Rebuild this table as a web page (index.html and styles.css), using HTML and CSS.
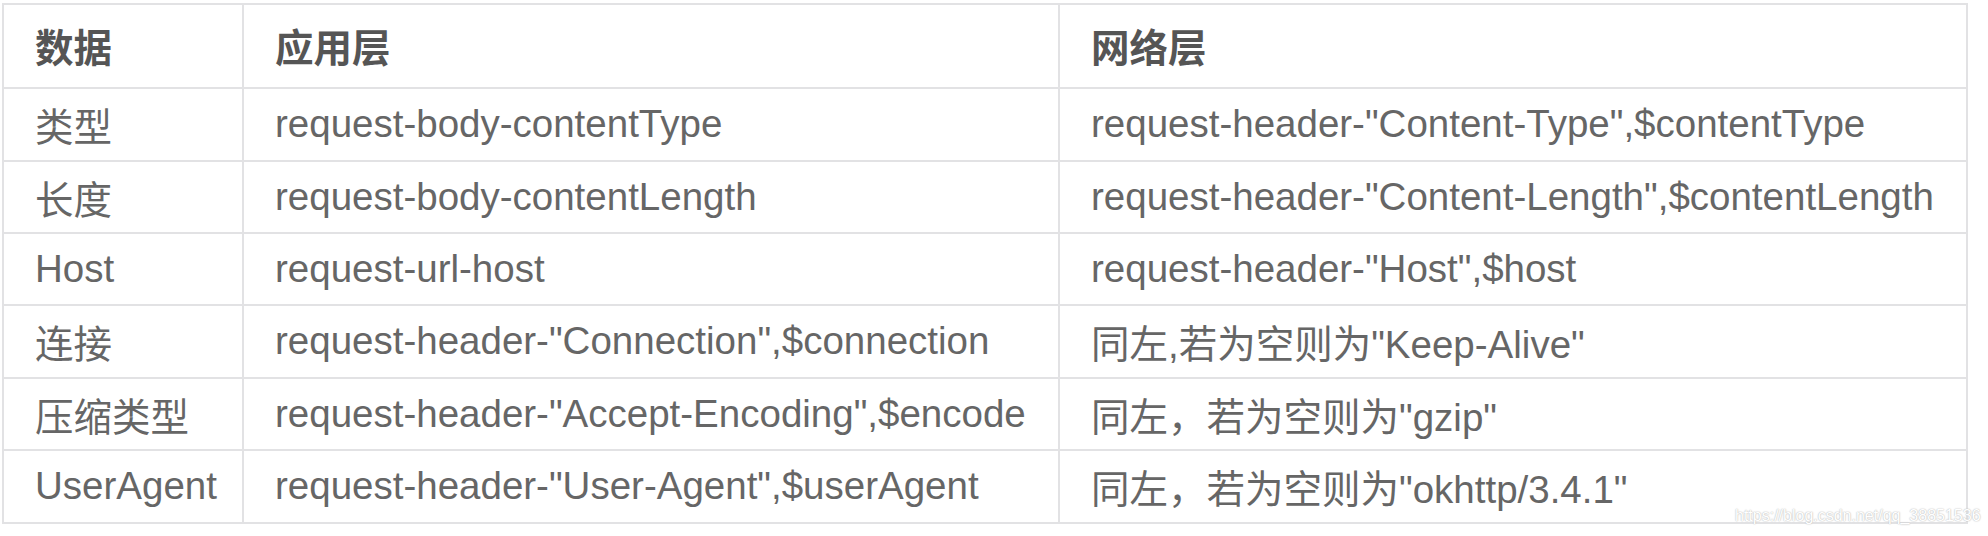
FILE: index.html
```html
<!DOCTYPE html>
<html lang="zh">
<head>
<meta charset="utf-8">
<link rel="stylesheet" href="styles.css">
</head>
<body>
<div class="page">
  <div class="table">
    <div class="cell head">数据</div>
    <div class="cell head">应用层</div>
    <div class="cell head">网络层</div>

    <div class="cell">类型</div>
    <div class="cell">request-body-contentType</div>
    <div class="cell">request-header-"Content-Type",$contentType</div>

    <div class="cell">长度</div>
    <div class="cell">request-body-contentLength</div>
    <div class="cell">request-header-"Content-Length",$contentLength</div>

    <div class="cell">Host</div>
    <div class="cell">request-url-host</div>
    <div class="cell">request-header-"Host",$host</div>

    <div class="cell">连接</div>
    <div class="cell">request-header-"Connection",$connection</div>
    <div class="cell">同左,若为空则为"Keep-Alive"</div>

    <div class="cell">压缩类型</div>
    <div class="cell">request-header-"Accept-Encoding",$encode</div>
    <div class="cell">同左，若为空则为"gzip"</div>

    <div class="cell">UserAgent</div>
    <div class="cell">request-header-"User-Agent",$userAgent</div>
    <div class="cell">同左，若为空则为"okhttp/3.4.1"</div>
  </div>
  <div class="watermark">https://blog.csdn.net/qq_38851536</div>
</div>
</body>
</html>
```
FILE: styles.css
```css
html, body {
  margin: 0;
  padding: 0;
  background: #ffffff;
}

.page {
  position: relative;
  width: 1988px;
  height: 536px;
  overflow: hidden;
  padding: 3px 0 0 2px;
  box-sizing: border-box;
  font-family: "Liberation Sans", "Noto Sans CJK SC", sans-serif;
}

.table {
  display: grid;
  grid-template-columns: 240px 816px 908px;
  grid-template-rows: 84px 73px 72px 72px 73px 72px 73px;
  width: max-content;
  border-top: 2px solid #e2e2e4;
  border-left: 2px solid #e2e2e4;
}

.cell {
  display: flex;
  align-items: center;
  box-sizing: border-box;
  padding: 0 0 1px 31px;
  border-right: 2px solid #e2e2e4;
  border-bottom: 2px solid #e2e2e4;
  font-size: 38.5px;
  color: #666666;
  white-space: nowrap;
}

.cell.head {
  padding-bottom: 2px;
  font-weight: bold;
  color: #555555;
}

.watermark {
  position: absolute;
  left: 1735px;
  top: 507px;
  font-size: 16px;
  color: #ffffff;
  text-shadow: 0 0 1px #b8b8b8, 0 0 2px #c8c8c8;
  white-space: nowrap;
}
```
